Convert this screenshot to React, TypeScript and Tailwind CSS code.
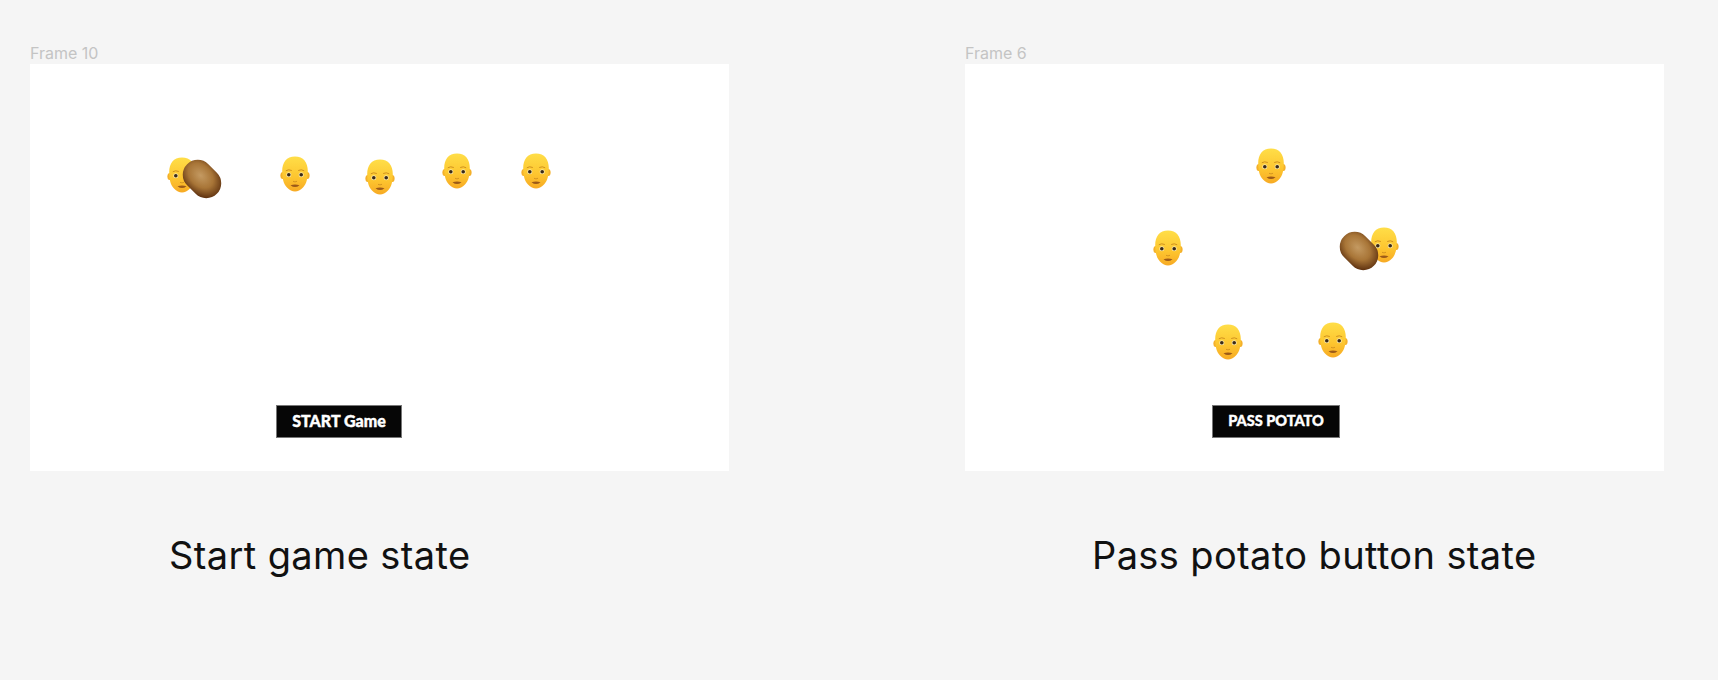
// Game state frames, Figma board style
type Spot = { x: number; y: number };

function Head({ x, y }: Spot) {
  return (
    <svg className="absolute blur-[0.4px]" style={{ left: x - 15, top: y - 18 }} width="30" height="36" viewBox="0 0 30 36">
      <ellipse cx="2.800" cy="19.500" rx="2.400" ry="3.600" fill="#f4b02a" />
      <ellipse cx="27.200" cy="19.500" rx="2.400" ry="3.600" fill="#f4b02a" />
      <path d="M15 .5C6.500 .5 2.200 6.500 2.200 15 2.200 22.500 3.500 28 7 31.500 9.500 34.300 12.300 35.500 15 35.500S20.500 34.300 23 31.500C26.500 28 27.800 22.500 27.800 15 27.800 6.500 23.500 .5 15 .5Z" fill="url(#skin)" />
      <path d="M5.800 14.800Q8.500 13 11.800 14.500M18.200 14.500Q21.500 13 24.200 14.800" stroke="#c98a1c" strokeWidth=".9" fill="none" />
      <circle cx="8.800" cy="18.800" r="2.500" fill="#f8e6a8" />
      <circle cx="21.200" cy="18.800" r="2.500" fill="#f8e6a8" />
      <circle cx="8.800" cy="18.800" r="1.800" fill="#3a2a18" />
      <circle cx="21.200" cy="18.800" r="1.800" fill="#3a2a18" />
      <path d="M13 25.300Q15 26.500 17 25.300" stroke="#d0921f" strokeWidth=".9" fill="none" />
      <path d="M10.500 29.200Q15 27.800 19.500 29.200 15 33 10.500 29.200Z" fill="#9c5a18" />
    </svg>
  );
}

function Potato({ x, y }: Spot) {
  return (
    <svg className="absolute blur-[0.4px]" style={{ left: x - 22, top: y - 22 }} width="44" height="44" viewBox="0 0 44 44">
      <rect x="1" y="7" width="42" height="30" rx="15" transform="rotate(45 22 22)" fill="url(#spud)" />
    </svg>
  );
}

function Frame({ label, caption, button, captionPad, buttonPad, buttonClass, heads, potato }: {
  label: string;
  caption: string;
  button: string;
  captionPad: string;
  buttonPad: string;
  buttonClass: string;
  heads: Spot[];
  potato: Spot;
}) {
  return (
    <div className="w-[699px] shrink-0">
      <div className="text-[16px] leading-[18px] text-[#c4c4c4] mb-[2px] -mt-[1px]">{label}</div>
      <div className={`relative h-[407px] bg-white flex flex-col justify-end pb-[33px] ${buttonPad}`}>
        {heads.map((h, i) => (
          <Head key={i} x={h.x} y={h.y} />
        ))}
        <Potato x={potato.x} y={potato.y} />
        <div className={`h-[33px] bg-[#060606] flex items-center justify-center pb-[2px] text-white font-black font-['Lato',sans-serif] [-webkit-text-stroke:0.4px_white] border border-[#777] ${buttonClass}`}>
          {button}
        </div>
      </div>
      <div className={`mt-[61px] text-[38px] leading-[46px] tracking-[.01em] text-[#111] ${captionPad}`}>{caption}</div>
    </div>
  );
}

export default function App() {
  return (
    <div className="w-full h-[680px] bg-[#f5f5f5] overflow-hidden flex gap-[236px] pl-[30px] pt-[45px] font-['Inter',sans-serif]">
      <svg width="0" height="0" className="absolute">
        <defs>
          <linearGradient id="skin" x1="0" y1="0" x2="0" y2="1">
            <stop offset="0" stopColor="#ffde48" />
            <stop offset=".6" stopColor="#fdc52f" />
            <stop offset="1" stopColor="#f7aa24" />
          </linearGradient>
          <radialGradient id="spud" cx=".42" cy=".45" r=".62">
            <stop offset="0" stopColor="#c49a62" />
            <stop offset=".55" stopColor="#a87537" />
            <stop offset="1" stopColor="#5f3210" />
          </radialGradient>
        </defs>
      </svg>
      <Frame
        label="Frame 10"
        caption="Start game state"
        button="START Game"
        captionPad="pl-[139px]"
        buttonPad="pl-[246px]"
        buttonClass="w-[126px] text-[16px]"
        heads={[
          { x: 152, y: 111 },
          { x: 265, y: 110 },
          { x: 350, y: 113 },
          { x: 427, y: 107 },
          { x: 506, y: 107 },
        ]}
        potato={{ x: 172, y: 115 }}
      />
      <Frame
        label="Frame 6"
        caption="Pass potato button state"
        button="PASS POTATO"
        captionPad="pl-[127px]"
        buttonPad="pl-[247px]"
        buttonClass="w-[128px] text-[14.500px]"
        heads={[
          { x: 306, y: 102 },
          { x: 203, y: 184 },
          { x: 419, y: 181 },
          { x: 263, y: 278 },
          { x: 368, y: 276 },
        ]}
        potato={{ x: 394, y: 187 }}
      />
    </div>
  );
}
